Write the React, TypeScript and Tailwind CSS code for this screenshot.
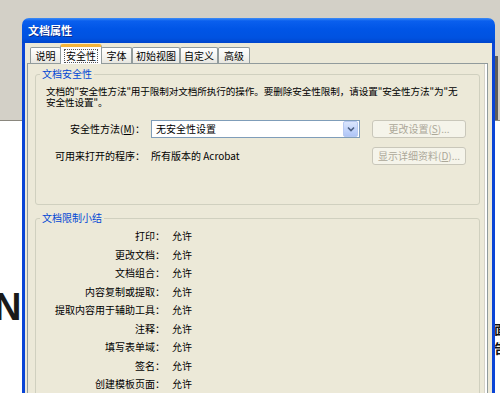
import React from "react";

const tabs = [
  { label: "说明", w: "w-[31px]" },
  { label: "安全性", w: "w-[42px]", active: true },
  { label: "字体", w: "w-[31px]" },
  { label: "初始视图", w: "w-[48px]" },
  { label: "自定义", w: "w-[38px]" },
  { label: "高级", w: "w-[32px]" },
];

const rows = [
  "打印",
  "更改文档",
  "文档组合",
  "内容复制或提取",
  "提取内容用于辅助工具",
  "注释",
  "填写表单域",
  "签名",
  "创建模板页面",
];

function GroupBox({
  title,
  className,
  children,
}: {
  title: string;
  className?: string;
  children: React.ReactNode;
}) {
  return (
    <div className={"relative border border-[#d0d0bf] rounded-[3px] " + (className ?? "")}>
      <span className="absolute left-[4px] top-[-8px] bg-[#ece9d8] px-[2px] text-[10px] leading-[14px] text-[#0046d5]">
        {title}
      </span>
      {children}
    </div>
  );
}

function DisabledButton({ children }: { children: React.ReactNode }) {
  return (
    <div className="w-[94px] h-[18px] rounded-[3px] border border-[#c9c7ba] bg-[#f5f4ea] flex items-center justify-center text-[10px] leading-[12px] text-[#aca899] whitespace-nowrap">
      {children}
    </div>
  );
}

export default function App() {
  return (
    <div className="relative w-[500px] h-[393px] overflow-hidden bg-white font-['Noto_Sans_CJK_SC','Noto_Sans',sans-serif] text-black">
      {/* desktop background */}
      <div className="flex flex-col w-full h-full">
        <div className="h-[121px] bg-[#d3d0c7] border-b border-[#8a877e] flex justify-end">
          <div className="w-[3px] mt-[56px] mr-[2px] bg-[#5e5d59]" />
        </div>
        <div className="flex-1 bg-white" />
      </div>

      {/* content behind the dialog */}
      <span className="absolute left-[-6px] top-[288px] font-['Liberation_Sans',sans-serif] font-bold text-[38px] leading-none text-[#1a1a1a]">
        N
      </span>
      <div className="absolute left-[494px] top-[322px] flex flex-col gap-[6px] text-[13px] leading-[13px] font-bold text-[#111]">
        <span>面</span>
        <span>告</span>
      </div>

      {/* dialog window */}
      <div className="absolute left-[22px] top-[18px] w-[473px] h-[390px] flex flex-col">
        <div className="h-[25px] shrink-0 rounded-t-[7px] bg-[linear-gradient(180deg,#3d8cf5_0%,#0a5fee_12%,#0055e6_45%,#0052e0_80%,#0045cc_100%)] flex items-center pl-[6px]">
          <span className="text-white font-bold text-[11px] leading-[13px] [text-shadow:1px_1px_0_#0a2a8a]">
            文档属性
          </span>
        </div>
        <div className="flex-1 bg-[#ece9d8] border-x-[3px] border-[#0a45d6] pl-[2px] pr-[4px] pt-[1px] flex flex-col">
          {/* tabs */}
          <div className="h-[19px] shrink-0 flex items-end pl-[3px] relative z-10">
            {tabs.map((t) =>
              t.active ? (
                <div
                  key={t.label}
                  className={`${t.w} h-[20px] -mx-[1px] -mb-px bg-[#fcfcfe] border-x border-[#919b9c] border-t-[3px] border-t-[#f4b43a] rounded-t-[3px] flex items-center justify-center`}
                >
                  <span className="border border-dotted border-[#555] px-[1px] text-[10px] leading-[12px]">
                    {t.label}
                  </span>
                </div>
              ) : (
                <div
                  key={t.label}
                  className={`${t.w} h-[16px] border-x border-t border-[#919b9c] rounded-t-[2px] bg-[linear-gradient(180deg,#ffffff_0%,#f3f3ef_60%,#e7e6df_100%)] flex items-center justify-center text-[10px] leading-[12px]`}
                >
                  {t.label}
                </div>
              )
            )}
          </div>

          {/* tab panel */}
          <div className="flex-1 border border-[#919b9c] shadow-[inset_-2px_0_0_#ffffff,inset_-3px_0_0_#d6d3c8] bg-[#ece9d8] pl-[7px] pr-[7px] pt-[10px] flex flex-col">
            <GroupBox title="文档安全性" className="h-[131px] shrink-0">
              <div className="pt-[11px] pl-[10px] pr-[12px] flex flex-col">
                <p className="text-[9.6px] leading-[11px] whitespace-nowrap tracking-[-0.1px]">
                  文档的"安全性方法"用于限制对文档所执行的操作。要删除安全性限制，请设置"安全性方法"为"无
                  <br />
                  安全性设置"。
                </p>
                <div className="mt-[12px] flex items-center h-[18px]">
                  <span className="w-[99px] text-right text-[10px] leading-[12px] whitespace-nowrap">
                    安全性方法(<span className="underline">M</span>)：
                  </span>
                  <div className="ml-[6px] w-[209px] h-[18px] border border-[#7f9db9] bg-white flex items-center">
                    <span className="flex-1 pl-[4px] text-[10px] leading-[12px]">无安全性设置</span>
                    <div className="w-[15px] h-[16px] mr-px rounded-[2px] border border-[#b7c9f2] bg-[linear-gradient(180deg,#dbe6fd_0%,#c2d4fb_55%,#afc5f6_100%)] flex items-center justify-center">
                      <svg width="8" height="6" viewBox="0 0 8 6">
                        <path d="M1 1.5 L4 4.5 L7 1.5" fill="none" stroke="#4d6185" strokeWidth="1.6" />
                      </svg>
                    </div>
                  </div>
                  <div className="ml-[12px]">
                    <DisabledButton>
                      更改设置(<span className="underline">S</span>)...
                    </DisabledButton>
                  </div>
                </div>
                <div className="mt-[9px] flex items-center h-[18px]">
                  <span className="w-[99px] text-right text-[10px] leading-[12px] whitespace-nowrap">可用来打开的程序：</span>
                  <span className="ml-[6px] w-[209px] text-[10px] leading-[12px]">所有版本的 Acrobat</span>
                  <div className="ml-[12px]">
                    <DisabledButton>
                      显示详细资料(<span className="underline">D</span>)...
                    </DisabledButton>
                  </div>
                </div>
              </div>
            </GroupBox>

            <GroupBox title="文档限制小结" className="mt-[13px] flex-1">
              <div className="pt-[8px] flex flex-col">
                {rows.map((r) => (
                  <div key={r} className="h-[18.5px] flex items-center text-[10px] leading-[12px]">
                    <span className="w-[129px] text-right whitespace-nowrap">{r}：</span>
                    <span className="ml-[7px]">允许</span>
                  </div>
                ))}
              </div>
            </GroupBox>
          </div>
        </div>
      </div>
    </div>
  );
}
